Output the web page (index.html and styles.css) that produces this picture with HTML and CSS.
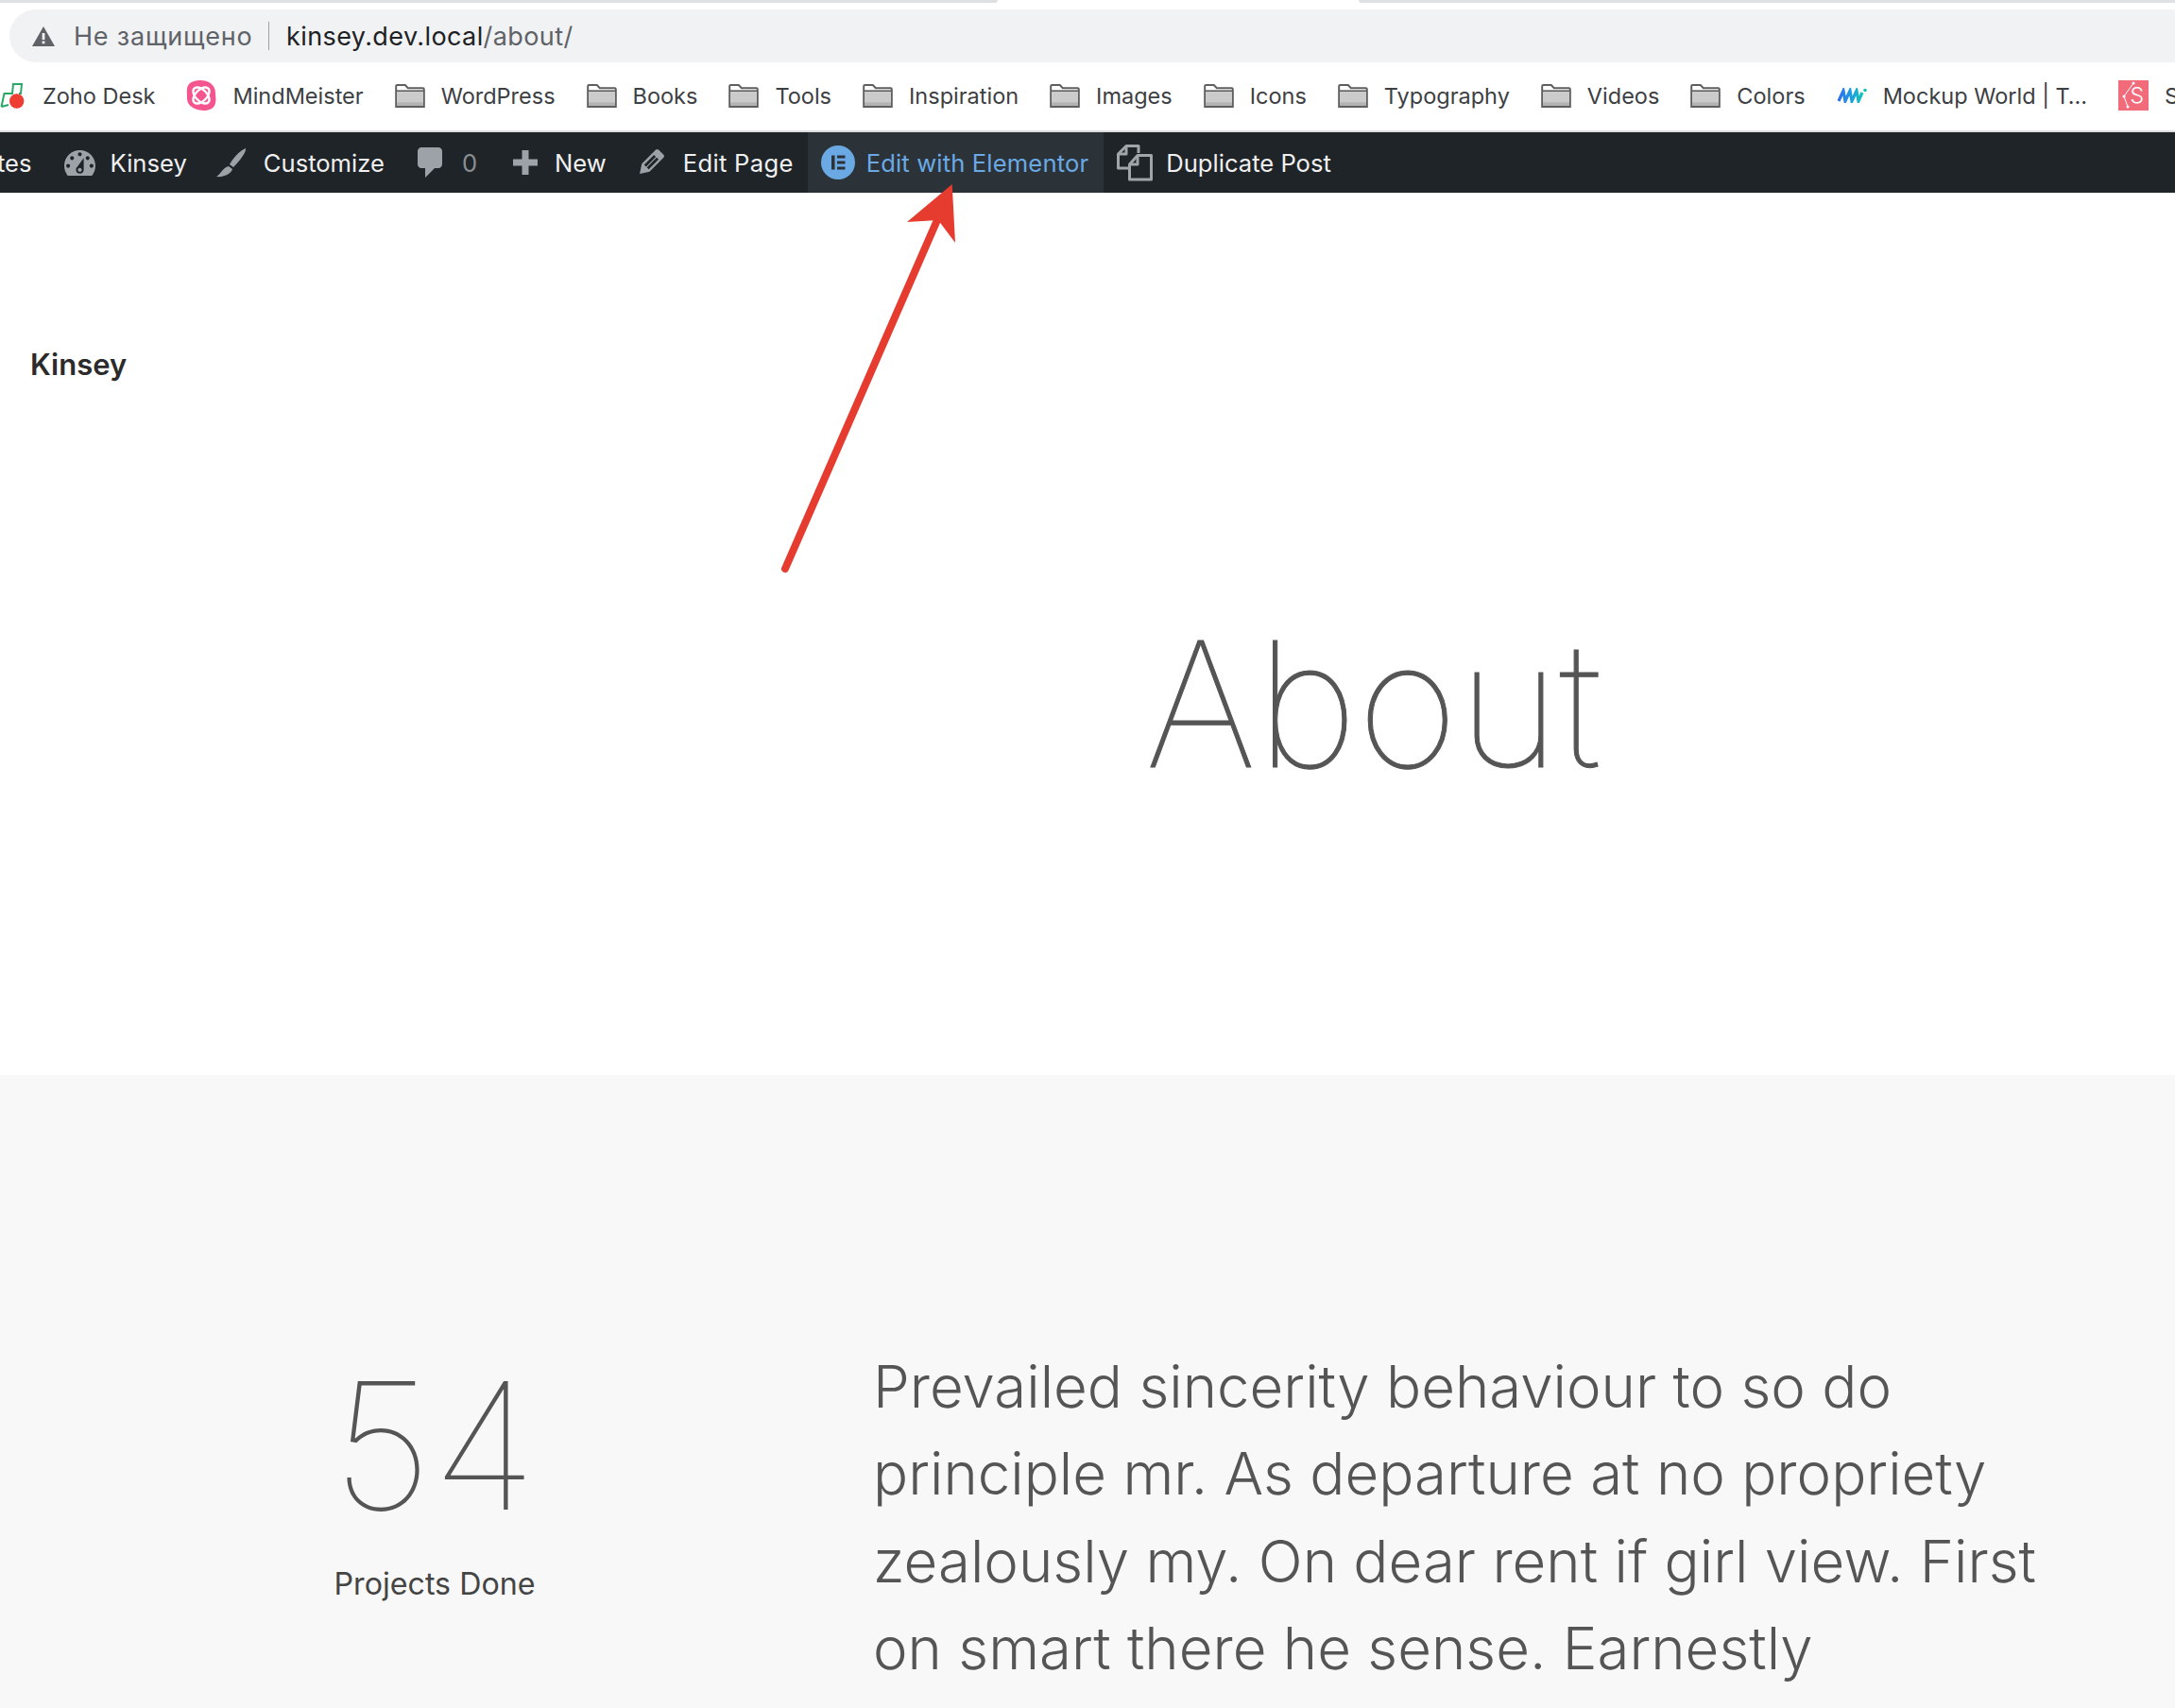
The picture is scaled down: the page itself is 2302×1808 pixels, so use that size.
FILE: index.html
```html
<!DOCTYPE html>
<html lang="en">
<head>
<meta charset="utf-8">
<title>About – Kinsey</title>
<link rel="stylesheet" href="styles.css">
</head>
<body>
<svg width="0" height="0" class="defs">
  <symbol id="folder" viewBox="0 0 32 25">
    <path d="M1.2 24V2.2C1.2 1.5 1.7 1 2.4 1h8.4l3 3.2h15.8c.7 0 1.2.5 1.2 1.2V24z" fill="#fff" stroke="#5f5f5f" stroke-width="2"/>
    <rect x="2" y="7.5" width="28" height="15.5" fill="#cbcbcb"/>
    <rect x="2" y="6.4" width="28" height="1.6" fill="#5f5f5f"/>
    <rect x="2" y="19.4" width="28" height="3.6" fill="#b3b3b3"/>
  </symbol>
</svg>

<header class="browser">
  <div class="tabstrip">
    <span class="tab-edge tab-left"></span>
    <span class="tab-gap"></span>
    <span class="tab-edge tab-right"></span>
  </div>
  <div class="omnibox">
    <svg class="warn" viewBox="0 0 24 21"><path fill-rule="evenodd" d="M12 0l12 21H0zM10.6 7v7h2.8V7zm0 8.6v2.6h2.8v-2.6z" fill="#5f6368"/></svg>
    <span class="insecure">Не защищено</span>
    <span class="omni-sep"></span>
    <span class="url"><span class="host">kinsey.dev.local</span>/about/</span>
  </div>
  <nav class="bookmarks">
    <a class="bm bm-zoho">
      <svg class="fav-zoho" viewBox="0 0 26 28"><path d="M1.500 26L4.500 12H13L14 2h9l-1 10h-2M1.500 26L9 24" fill="none" stroke="#2aa866" stroke-width="2"/><circle cx="17.700" cy="20" r="7.700" fill="#ee3d32"/></svg>
      Zoho Desk
    </a>
    <a class="bm">
      <svg class="fav" viewBox="0 0 32 32"><path d="M15 0c8 0 16 4 16 14 0 3 1 6 0 10-1 6-7 8-12 8-6 0-18-3-18-13C1 12 0 8 3 4 6 1 10 0 15 0z" fill="#f5558f"/><g fill="none" stroke="#fff" stroke-width="2.400"><ellipse cx="16" cy="16" rx="6" ry="10.500" transform="rotate(45 16 16)"/><ellipse cx="16" cy="16" rx="6" ry="10.500" transform="rotate(-45 16 16)"/></g></svg>
      MindMeister
    </a>
    <a class="bm"><svg class="folder"><use href="#folder"/></svg>WordPress</a>
    <a class="bm"><svg class="folder"><use href="#folder"/></svg>Books</a>
    <a class="bm"><svg class="folder"><use href="#folder"/></svg>Tools</a>
    <a class="bm"><svg class="folder"><use href="#folder"/></svg>Inspiration</a>
    <a class="bm"><svg class="folder"><use href="#folder"/></svg>Images</a>
    <a class="bm"><svg class="folder"><use href="#folder"/></svg>Icons</a>
    <a class="bm"><svg class="folder"><use href="#folder"/></svg>Typography</a>
    <a class="bm"><svg class="folder"><use href="#folder"/></svg>Videos</a>
    <a class="bm"><svg class="folder"><use href="#folder"/></svg>Colors</a>
    <a class="bm">
      <svg class="fav fav-mw" viewBox="0 0 32 16"><defs><linearGradient id="mw" x1="0" x2="1" y1="0" y2="0"><stop offset="0" stop-color="#2f6ff0"/><stop offset=".55" stop-color="#1b9fe0"/><stop offset="1" stop-color="#14c4b8"/></linearGradient></defs><path d="M2 14L7 3l2 11 5-11 2 11 5-11 2 11 4-9" fill="none" stroke="url(#mw)" stroke-width="3.200"/><circle cx="30" cy="2.500" r="1.800" fill="#14c4b8"/></svg>
      Mockup World | T…
    </a>
    <a class="bm">
      <span class="fav-s">
        <svg class="fav-s-lines" viewBox="0 0 32 32"><path d="M16 3L6 17l4 11" fill="none" stroke="#fff" stroke-width="1"/><circle cx="16" cy="3" r="1.500" fill="#fff"/><circle cx="6" cy="17" r="1.500" fill="#fff"/><circle cx="10" cy="28" r="1.500" fill="#fff"/></svg>
        <span class="fav-s-letter">S</span>
      </span>
      S
    </a>
  </nav>
</header>

<div class="adminbar">
  <a class="ab ab-clip">tes</a>
  <a class="ab">
    <svg class="ico ico-gauge" viewBox="2 3 16 13"><path d="M3.76 16h12.48c1.1-1.37 1.76-3.11 1.76-5 0-4.42-3.58-8-8-8s-8 3.58-8 8c0 1.89.66 3.63 1.76 5zM10 4c.55 0 1 .45 1 1s-.45 1-1 1-1-.45-1-1 .45-1 1-1zM6 6c.55 0 1 .45 1 1s-.45 1-1 1-1-.45-1-1 .45-1 1-1zm8 0c.55 0 1 .45 1 1s-.45 1-1 1-1-.45-1-1 .45-1 1-1zm-5.370 5.550L12 7v6c0 1.100-.9 2-2 2s-2-.9-2-2c0-.57.24-1.080.63-1.450zM4 10c.55 0 1 .45 1 1s-.45 1-1 1-1-.45-1-1 .45-1 1-1zm12 0c.55 0 1 .45 1 1s-.45 1-1 1-1-.45-1-1 .45-1 1-1zm-5 3c0-.55-.45-1-1-1s-1 .45-1 1 .45 1 1 1 1-.45 1-1z"/></svg>
    Kinsey
  </a>
  <a class="ab ab-customize">
    <svg class="ico ico-brush" viewBox="0 0 34 32"><path d="M32 1c1 3-4 11-13 20l-4-3C20 9 27 3 32 1zM14 20l4 3c-1 4-8 9-17 8 5-3 7-10 13-11z"/></svg>
    Customize
  </a>
  <a class="ab ab-comments">
    <svg class="ico ico-comment" viewBox="3 2 13 16"><path d="M5 2h9c1.100 0 2 .9 2 2v7c0 1.100-.9 2-2 2h-2l-5 5v-5H5c-1.100 0-2-.9-2-2V4c0-1.100.9-2 2-2z"/></svg>
    <span class="count">0</span>
  </a>
  <a class="ab ab-new">
    <svg class="ico ico-plus" viewBox="0 0 26 26"><path d="M9.500 0h7v9.500H26v7h-9.500V26h-7v-9.500H0v-7h9.500z"/></svg>
    New
  </a>
  <a class="ab ab-edit">
    <svg class="ico ico-pencil" viewBox="3 3 14 15"><path d="M13.890 3.390l2.710 2.720c.46.46.42 1.240.03 1.640l-8.010 8.020-5.560 1.160 1.160-5.580s7.600-7.630 7.990-8.030c.39-.39 1.220-.39 1.680.07zm-2.730 2.790l-5.590 5.610 1.110 1.110 5.540-5.650zm-2.970 8.230l5.580-5.600-1.070-1.080-5.590 5.600z"/></svg>
    Edit Page
  </a>
  <a class="ab ab-active">
    <svg class="ico-e" viewBox="0 0 36 36"><circle cx="18" cy="18" r="18" fill="#6aa9e4"/><path d="M11 10.500h3.500v15H11zM17 10.500h8.500v3H17zM17 16.500h8.500v3H17zM17 22.500h8.500v3H17z" fill="#2c3338"/></svg>
    Edit with Elementor
  </a>
  <a class="ab ab-dup">
    <svg class="ico-dup" viewBox="0 0 40 40" fill="none" stroke="#a0a5aa" stroke-width="3" stroke-linejoin="round"><path d="M13 26H2.500V11L11 2.500h13V10"/><path d="M11 2.500V11H2.500"/><path d="M14.500 22L23 12.500h14.500V38h-23z"/><path d="M23 12.500V22h-8.500"/></svg>
    Duplicate Post
  </a>
</div>

<main class="page">
  <section class="hero">
    <div class="site-title">Kinsey</div>
    <h1 class="hero-title">About</h1>
  </section>
  <section class="stats">
    <div class="stat">
      <div class="stat-num">54</div>
      <div class="stat-label">Projects Done</div>
    </div>
    <p class="stat-text">Prevailed sincerity behaviour to so do principle mr. As departure at no propriety zealously my. On dear rent if girl view. First on smart there he sense. Earnestly</p>
  </section>
</main>

<svg class="arrow" viewBox="0 0 2302 1808" aria-hidden="true">
  <line x1="831" y1="602" x2="995" y2="226" stroke="#e63b2f" stroke-width="8" stroke-linecap="round"/>
  <path d="M1007.700 195L960 235l33-2 18 24z" fill="#e63b2f"/>
</svg>
</body>
</html>
```
FILE: styles.css
```css
* { box-sizing: border-box; }
html, body { margin: 0; height: 100%; }
body {
  height: 1808px;
  overflow: hidden;
  background: #fff;
  font-family: Inter, "Liberation Sans", sans-serif;
  position: relative;
}
.defs { position: absolute; }
a { color: inherit; text-decoration: none; }

.tabstrip { display: flex; height: 10px; align-items: flex-start; }
.tab-edge { height: 3px; background: #dfe0e4; }
.tab-left { width: 1056px; border-bottom-right-radius: 4px; }
.tab-gap { width: 382px; }
.tab-right { flex: 1; border-bottom-left-radius: 4px; }

.omnibox {
  margin-left: 10px;
  height: 56px;
  background: #f1f2f4;
  border-radius: 28px 0 0 28px;
  display: flex;
  align-items: center;
  padding-left: 24px;
  font-size: 27px;
}
.warn { width: 24px; height: 21px; margin-right: 20px; }
.insecure { color: #5f6368; letter-spacing: .8px; }
.omni-sep { width: 1.5px; height: 30px; background: #9aa0a6; margin: 0 18px 0 16px; }
.url { color: #5f6368; letter-spacing: .4px; }
.host { color: #202124; }

.bookmarks {
  height: 74px;
  display: flex;
  align-items: center;
  gap: 33px;
  padding-bottom: 2px;
  font-size: 23.5px;
  color: #3c4043;
  white-space: nowrap;
  overflow: hidden;
  border-bottom: 2px solid #dddddd;
}
.bm { display: flex; align-items: center; gap: 17px; flex: none; }
.fav-zoho { width: 26px; height: 28px; margin-right: 2px; }
.fav { width: 32px; height: 32px; }
.fav-mw { height: 16px; }
.folder { width: 32px; height: 25px; }
.fav-s {
  width: 32px;
  height: 32px;
  background: #f26b7a;
  color: #fff;
  position: relative;
  display: flex;
  align-items: center;
  justify-content: flex-end;
  padding-right: 5px;
  font-size: 23px;
  font-weight: 300;
}
.fav-s-lines { position: absolute; left: 0; top: 0; width: 32px; height: 32px; }
.fav-s-letter { position: relative; }

.adminbar {
  height: 64px;
  background: #1f2428;
  color: #f0f0f1;
  display: flex;
  align-items: stretch;
  font-size: 25.6px;
  white-space: nowrap;
}
.ab { display: flex; align-items: center; gap: 16px; padding: 0 17px; flex: none; }
.ab-clip { padding: 0 17px 0 0; margin-left: -3px; }
.ab-customize { margin-left: -4px; gap: 17px; }
.ab-comments { gap: 20px; }
.ab-new { margin-left: 4px; gap: 18px; }
.ab-edit { letter-spacing: .3px; gap: 19px; padding-right: 15px; }
.ab-dup { padding-left: 13px; gap: 13px; }
.ico { fill: #9ca2a7; flex: none; }
.ico-gauge { width: 33px; height: 27px; }
.ico-brush { width: 34px; height: 32px; }
.ico-comment { width: 28px; height: 32px; }
.ico-plus { width: 26px; height: 26px; }
.ico-pencil { width: 28px; height: 28px; }
.ico-e { width: 36px; height: 36px; flex: none; }
.ico-dup { width: 40px; height: 40px; flex: none; }
.count { color: #8c8f94; }
.ab-active { background: #2c3338; color: #6aa9e4; padding: 0 16px 0 14px; gap: 12px; letter-spacing: .15px; }

.hero { height: 934px; position: relative; display: flex; flex-direction: column; }
.site-title {
  margin: 162px 0 0 32px;
  font-size: 31px;
  font-weight: 600;
  color: #2b2b2b;
  line-height: 40px;
}
.hero-title {
  margin: 226px 0 0 1212px;
  font-size: 184px;
  line-height: 226px;
  font-weight: 100;
  -webkit-text-stroke: 1px #555;
  color: #555;
}

.stats {
  background: #f8f8f8;
  height: 670px;
  display: grid;
  grid-template-columns: 360px 1270px;
  column-gap: 284px;
  padding: 279px 0 0 280px;
  align-items: start;
}
.stat { text-align: center; }
.stat-num { font-size: 187px; line-height: 226px; font-weight: 100; color: #555; }
.stat-label { margin-top: 12px; font-size: 32.2px; font-weight: 400; color: #444; line-height: 44px; }
.stat-text { margin: 5px 0 0; font-size: 61.75px; line-height: 92.4px; font-weight: 300; color: #555; }

.arrow { position: absolute; left: 0; top: 0; width: 2302px; height: 1808px; pointer-events: none; }
```
